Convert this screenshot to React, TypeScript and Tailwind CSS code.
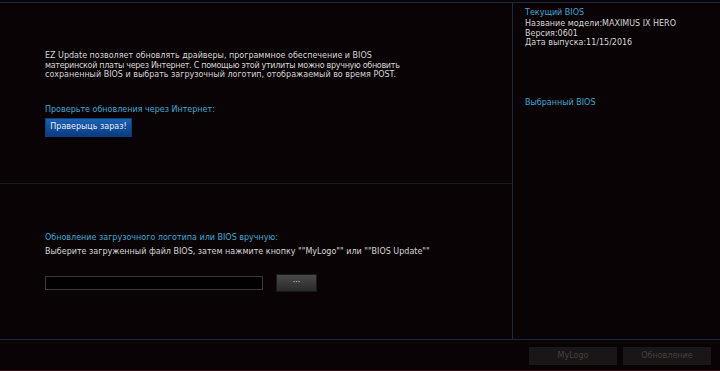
import React from "react";

export default function App() {
  const font = { fontFamily: '"DejaVu Sans", Verdana, sans-serif' };
  return (
    <div className="w-[720px] h-[371px] bg-[#0a0305] flex flex-col overflow-hidden" style={font}>
      <div className="h-[2px]" />
      <div className="h-px bg-[#1b2a3e]" />
      <div className="flex h-[336px]">
        <div className="w-[512px] flex flex-col">
          <div className="h-[180px] pl-[45px] pt-[48px] flex flex-col">
            <p className="text-[8px] leading-[9.5px] text-[#d6d6d6] whitespace-nowrap">
              EZ Update позволяет обновлять драйверы, программное обеспечение и BIOS
              <br />
              <span className="tracking-[-0.3px]">материнской платы через Интернет. С помощью этой утилиты можно вручную обновить</span>
              <br />
              сохраненный BIOS и выбрать загрузочный логотип, отображаемый во время POST.
            </p>
            <p className="mt-[25px] text-[8px] leading-[10px] text-[#3fa9d6]">Проверьте обновления через Интернет:</p>
            <button className="mt-[3px] w-[87px] h-[19px] bg-gradient-to-b from-[#1c62b4] to-[#0a3c82] border border-[#0d3e78] text-[8px] text-[#e8eef8] flex items-center justify-center">
              Праверыць зараз!
            </button>
          </div>
          <div className="h-px bg-[#161c26]" />
          <div className="flex-1 pl-[45px] pt-[49px] flex flex-col">
            <p className="text-[8px] leading-[10px] text-[#3fa9d6]">Обновление загрузочного логотипа или BIOS вручную:</p>
            <p className="mt-[4px] text-[8px] leading-[10px] text-[#d6d6d6]">Выберите загруженный файл BIOS, затем нажмите кнопку ""MyLogo"" или ""BIOS Update""</p>
            <div className="mt-[17px] flex items-center gap-[13px]">
              <div className="w-[218px] h-[14px] bg-[#020101] border border-[#3a3838]" />
              <div className="w-[41px] h-[18px] bg-gradient-to-b from-[#4a4a4a] to-[#2a2a2a] border border-[#1a1a1a] text-[#d8d8d8] text-[8px] leading-none flex items-center justify-center">
                ···
              </div>
            </div>
          </div>
        </div>
        <div className="w-px bg-[#1b2a3e]" />
        <div className="flex-1 pl-[12px] pt-[5px] flex flex-col">
          <p className="text-[8px] leading-[10px] text-[#3fa9d6]">Текущий BIOS</p>
          <p className="text-[8px] leading-[9.5px] text-[#d6d6d6] mt-[1px]">Название модели:MAXIMUS IX HERO</p>
          <p className="text-[8px] leading-[9.5px] text-[#d6d6d6]">Версия:0601</p>
          <p className="text-[8px] leading-[9.5px] text-[#d6d6d6]">Дата выпуска:11/15/2016</p>
          <p className="mt-[50px] text-[8px] leading-[10px] text-[#3fa9d6]">Выбранный BIOS</p>
        </div>
      </div>
      <div className="h-px bg-[#1b2a3e]" />
      <div className="flex-1 flex justify-end items-center gap-[6px] pr-[9px] pt-[2px]">
        <div className="w-[88px] h-[18px] bg-[#1a1517] text-[#45403f] text-[8px] flex items-center justify-center">MyLogo</div>
        <div className="w-[88px] h-[18px] bg-[#1a1517] text-[#45403f] text-[8px] flex items-center justify-center">Обновление</div>
      </div>
      <div className="h-px bg-[#3a0c10]" />
    </div>
  );
}
